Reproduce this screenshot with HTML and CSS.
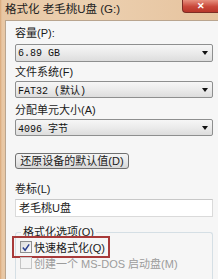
FILE: index.html
```html
<!DOCTYPE html>
<html>
<head>
<meta charset="utf-8">
<link rel="stylesheet" href="styles.css">
</head>
<body>
<div class="window">
  <div class="titlebar">
    <span class="title">格式化 老毛桃U盘 (G:)</span>
    <span class="close">✕</span>
  </div>
  <div class="panel">
    <div class="label l1">容量(P):</div>
    <div class="combo c1"><span class="val">6.89 GB</span><span class="arrow"></span></div>
    <div class="label l2">文件系统(F)</div>
    <div class="combo c2"><span class="val">FAT32 (默认)</span><span class="arrow"></span></div>
    <div class="label l3">分配单元大小(A)</div>
    <div class="combo c3"><span class="val">4096 字节</span><span class="arrow"></span></div>
    <div class="btn">还原设备的默认值(D)</div>
    <div class="label l4">卷标(L)</div>
    <div class="textbox">老毛桃U盘</div>
    <div class="group">
      <span class="legend">格式化选项(O)</span>
      <div class="row checked"><span class="box"><svg width="11" height="11" viewBox="0 0 11 11"><path d="M2 5.5 L4.5 8.5 L9 2" fill="none" stroke="#2a3f8f" stroke-width="1.6"/></svg></span><span>快速格式化(Q)</span></div>
      <div class="row disabled"><span class="box"></span><span>创建一个 MS-DOS 启动盘(M)</span></div>
    </div>
  </div>
</div>
</body>
</html>
```
FILE: styles.css
```css
html, body {
  margin: 0;
  padding: 0;
  width: 218px;
  height: 279px;
  overflow: hidden;
  background: #e7c6a2;
}
.window {
  width: 218px;
  height: 279px;
  background: linear-gradient(90deg, #d9a676 0px, #e8c7a4 2px, #ecd0b0 40%, #e6c39e 100%);
  font-family: "Liberation Sans", "Noto Sans CJK SC", sans-serif;
  font-size: 11px;
  color: #1a1a1a;
  display: flex;
  flex-direction: column;
}
.titlebar {
  height: 20px;
  display: flex;
  align-items: flex-start;
  justify-content: space-between;
}
.title {
  margin-left: 5px;
  margin-top: 1px;
  line-height: 16px;
  font-size: 11.5px;
  color: #222;
}
.close {
  width: 35px;
  height: 12px;
  background: linear-gradient(#e7907e, #c9483a 55%, #b8362a);
  border: 1px solid #7d2d24;
  border-top: none;
  border-right: none;
  border-radius: 0 0 0 4px;
  color: #fff;
  font-size: 9px;
  font-weight: bold;
  line-height: 12px;
  text-align: center;
}
.panel {
  flex: 1;
  margin-left: 5px;
  background: #f6f6f6;
  border-top: 1px solid #b9a58f;
  border-left: 1px solid #b9a58f;
  padding-left: 9px;
  padding-right: 5px;
  display: flex;
  flex-direction: column;
  align-items: flex-start;
}
.label {
  height: 14px;
  line-height: 14px;
  color: #1a1a1a;
}
.l1 { margin-top: 5px; }
.l2 { margin-top: 3px; }
.l3 { margin-top: 5px; }
.l4 { margin-top: 13px; }
.combo {
  align-self: stretch;
  box-sizing: border-box;
  height: 17px;
  border: 1px solid #8e8f8f;
  border-radius: 2px;
  background: linear-gradient(#f6f6f6, #ebebeb 50%, #dddddd);
  display: flex;
  align-items: center;
  justify-content: space-between;
  padding: 0 4px 0 2px;
}
.c1 { margin-top: 4px; height: 18px; }
.c2 { margin-top: 2px; }
.c3 { margin-top: 2px; }
.val {
  font-family: "Liberation Mono", "Noto Sans CJK SC", monospace;
  font-size: 10px;
  color: #111;
}
.arrow {
  width: 0;
  height: 0;
  border-left: 3.5px solid transparent;
  border-right: 3.5px solid transparent;
  border-top: 4px solid #111;
}
.btn {
  margin-top: 17px;
  box-sizing: border-box;
  width: 114px;
  height: 16px;
  border: 1px solid #707070;
  border-radius: 3px;
  background: linear-gradient(#f4f4f4, #e9e9e9 50%, #d7d7d7);
  line-height: 14px;
  text-align: center;
}
.textbox {
  margin-top: 3px;
  align-self: stretch;
  box-sizing: border-box;
  height: 18px;
  background: #fff;
  border: 1px solid #dadada;
  border-top-color: #c8c8c8;
  padding-left: 3px;
  line-height: 16px;
}
.group {
  margin-top: 15px;
  align-self: stretch;
  flex: 1;
  border: 1px solid #d5dfe5;
  border-bottom: none;
  border-radius: 3px 3px 0 0;
  display: flex;
  flex-direction: column;
  align-items: flex-start;
}
.legend {
  margin-top: -8px;
  margin-left: 5px;
  padding: 0 2px;
  background: #f6f6f6;
  line-height: 14px;
}
.row {
  display: flex;
  align-items: center;
  gap: 2px;
  box-sizing: border-box;
  height: 22px;
}
.row .box {
  box-sizing: border-box;
  width: 12px;
  height: 12px;
  border: 1px solid #8f8f8f;
  background: linear-gradient(135deg, #dcdcdc, #fbfbfb);
  display: flex;
  align-items: center;
  justify-content: center;
}
.checked {
  margin-top: -3px;
  margin-left: -4px;
  width: 98px;
  border: 2px solid #a83a3a;
  padding-left: 6px;
}
.disabled {
  margin-top: -2px;
  margin-left: 4px;
  height: 14px;
  color: #9c9c9c;
}
.disabled .box {
  border-color: #c5c5c5;
  background: #f4f4f4;
}
```
